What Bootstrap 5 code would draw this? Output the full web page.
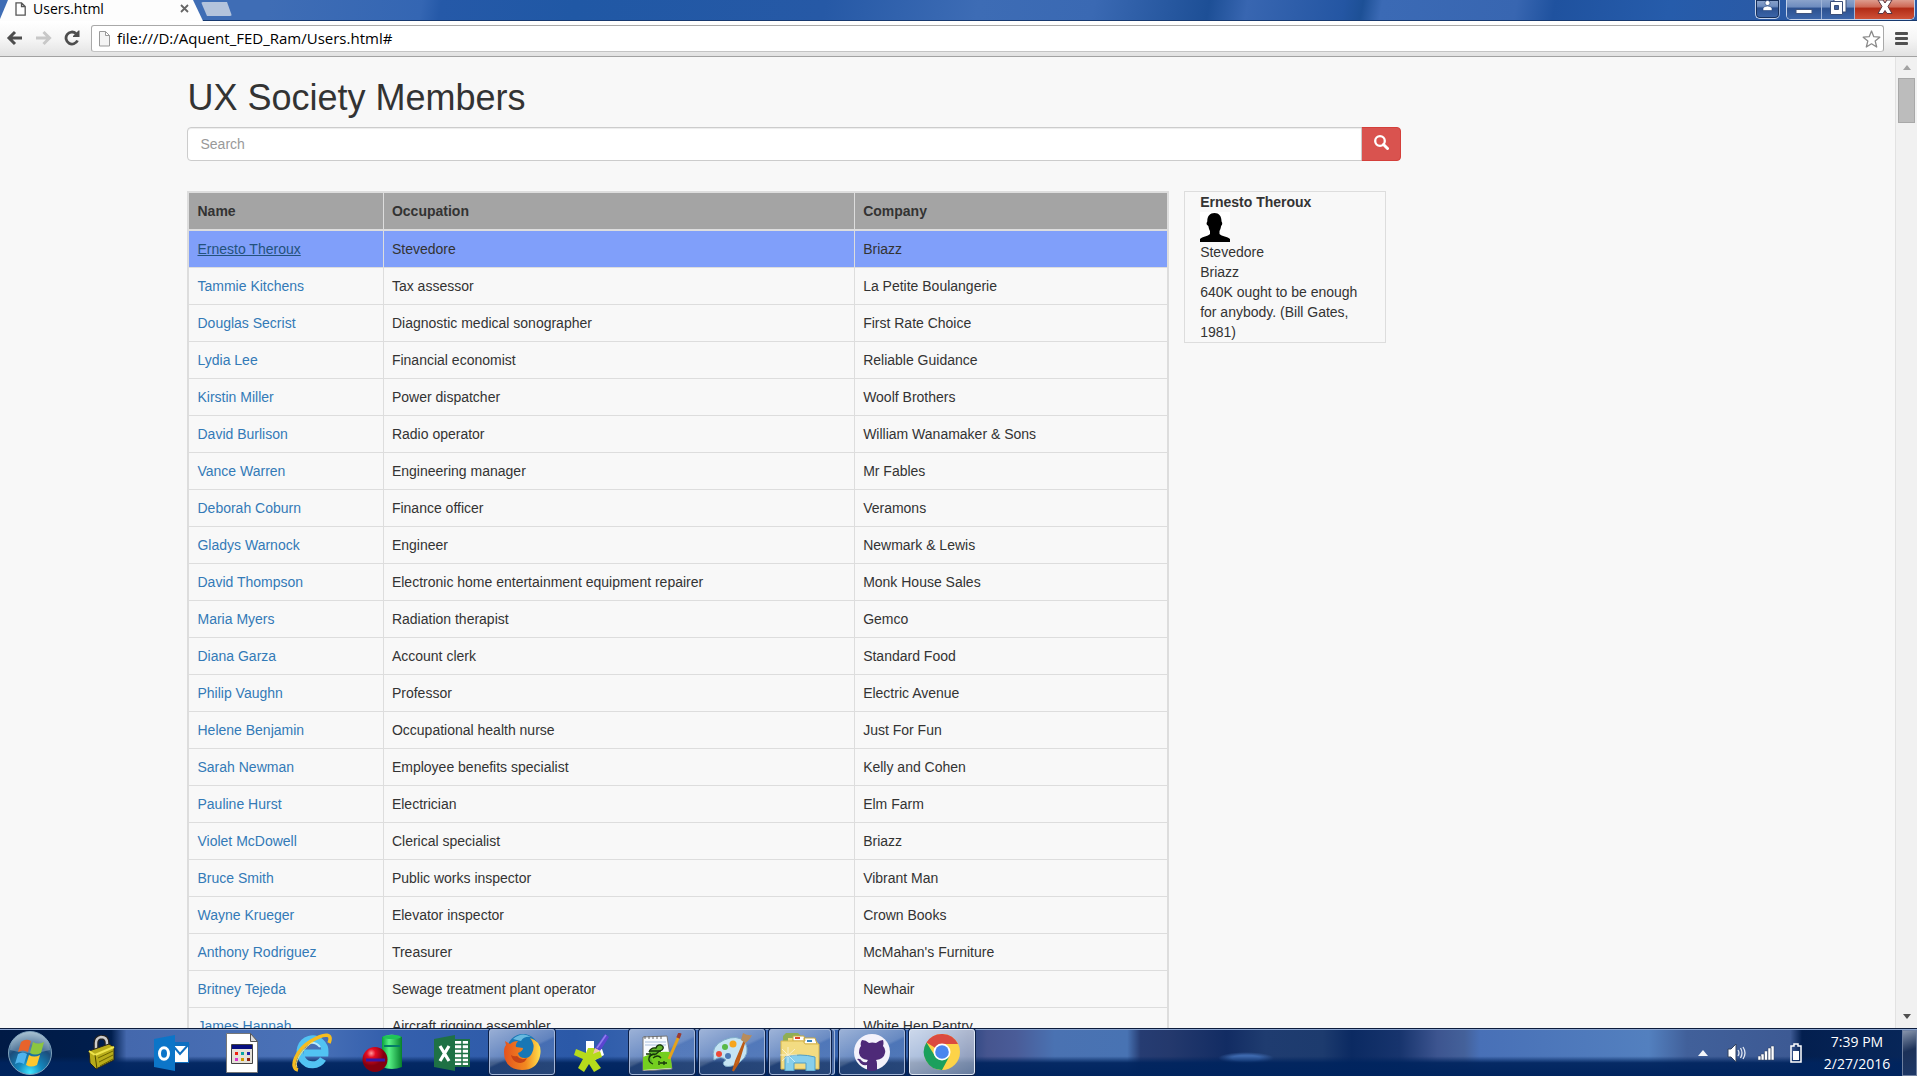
<!DOCTYPE html>
<html lang="en">
<head>
<meta charset="utf-8">
<meta name="viewport" content="width=device-width, initial-scale=1">
<title>Users.html</title>
<link href="https://cdn.jsdelivr.net/npm/bootstrap@5.3.0/dist/css/bootstrap.min.css" rel="stylesheet">
<style>
  body { font-family: "Liberation Sans", Arial, sans-serif; font-size: 14px; line-height: 20px; color: #333; background: #fff; }
  button { border: 0; background: none; padding: 0; }
  .desktop { padding: 0 3px 4px 0; }
  .chrome-font { font-family: "Open Sans", "Noto Sans", sans-serif; color: #000; }

  /* Window title strip */
  .titlebar { height: 21px; border-bottom: 1px solid #17396f;
    background: linear-gradient(100deg, #3f6db5 0, #3f6db5 14%, #3466b3 22%, #2559a8 23%, #2058a5 30%, #2659a6 43%, #3d6cb5 51%, #3a69b3 57%, #1d4f96 63%, #3866b1 65%, #2456a3 70%, #1d5096 71%, #3b6ab5 72%, #3866b1 79%, #1f529f 81%, #265cab 87%, #2a5aa6 92%, #2a5aa6 100%); }
  .tab-shape { width: 204px; height: 21px; margin-bottom: -1px; clip-path: polygon(0 90%, 8px 0, 193px 0, 203px 100%, 0 100%);
    background: #fdfdfd; padding: 0 15px 4px 15px; font-size: 14px; line-height: 17px; }
  .tab-label { margin-left: 7px; }
  .new-tab { width: 31px; height: 14px; background: #b3c3dc; clip-path: polygon(0 0, 26px 0, 31px 100%, 6px 100%); margin: 2px 0 0 -3px; border-radius: 2px; }
  .win-btns { padding-right: 2px; gap: 6px; }
  .win-box { height: 20px; border: 1px solid #c4d2ea; border-top: 0; border-radius: 0 0 5px 5px; overflow: hidden; box-shadow: inset 0 0 0 1px #17305c; }
  .glass { height: 19px; background: linear-gradient(#8ba3cb 0, #6f8dbf 35%, #2d5190 45%, #3c66aa 100%); border-right: 1px solid #9fb4d8; }
  .glass-close { background: linear-gradient(#dd9c8e 0, #cf6b58 35%, #b22c17 45%, #cf5238 100%); border-right: 0; }

  /* Address row */
  .toolbar { height: 36px; background: linear-gradient(#fff, #f6f6f6 50%, #e2e2e2); border-bottom: 1px solid #a2a2a2; padding: 4px 9px 0 6px; }
  .omnibox { height: 27px; border: 1px solid #a9a9a9; border-bottom-color: #c4c4c4; border-radius: 3px; background: #fff; padding: 0 2px 0 6px; }
  .omnibox input { border: 0; outline: 0; background: transparent; font-size: 15px; min-width: 0; padding: 0 0 2px; height: 25px; }

  /* Page area */
  .view { background: #f8f8f8; min-height: 0; }
  .doc { overflow: hidden; min-width: 0; padding: 0 12px 0 17px; }
  .scroll-track { width: 22px; background: #f1f1f1; border-left: 1px solid #e2e2e2; padding: 8px 2px 9px 2px; }
  .scroll-thumb { width: 17px; height: 45px; background: #bcbcbc; border: 1px solid #a8a8a8; margin-top: 8px; }
  .heading { font-size: 36px; line-height: 40px; font-weight: 400; margin: 0; padding: 21px 0 9px; }
  .search .form-control { height: 34px; font-size: 14px; line-height: 20px; padding: 6px 12px; border-color: #ccc; border-radius: 4px 0 0 4px; box-shadow: inset 0 1px 1px rgba(0,0,0,.075); }
  .search .form-control::placeholder { color: #999; }
  .btn-find { background: #d9534f; border: 1px solid #d43f3a; width: 40px; height: 34px; border-radius: 0 4px 4px 0; padding: 0 0 3px; }
  .gutter { padding: 0 15px; }
  .results { margin: 30px 15px 0 -15px; }
  .members { --bs-table-bg: transparent; --bs-table-color: #333; table-layout: fixed; margin: 0; border: 2px solid #ddd; border-collapse: collapse; }
  .members > :not(caption) > * > * { padding: 8px; border: 1px solid #ddd; color: #333; line-height: 20px; }
  .members > thead > tr > th { background: #a4a4a4; border-bottom: 2px solid #ddd; }
  .members a { color: #337ab7; text-decoration: none; }
  .members > tbody > tr.picked > td { background: #809ffa; }
  .members tr.picked a { color: #23527c; text-decoration: underline; }
  .c-name { width: 19.9%; } .c-job { width: 48.1%; }
  .profile { border: 1px solid #ddd; }

  /* Taskbar */
  .taskbar { height: 48px; border-top: 1px solid #0c1c3c; box-shadow: inset 0 1px 0 #8ba5cf;
    background: linear-gradient(transparent 0, transparent 58%, rgba(0,36,94,.93) 72%, #00245e 100%),
    radial-gradient(ellipse 28px 6px at 65% 62%, #3d68ad 0, #3d68ad 50%, transparent 100%),
    linear-gradient(90deg, #001a45 0, #001e4d 5.8%, #4468ad 6.6%, #4a72b8 16%, #3560ad 20%, #2b59a8 30%, #3d68b2 35%, #3462ad 48%, #2b4682 50.5%, #46558f 51.5%, #4a5c98 53%, #4a72b2 55%, #4873b3 58.8%, #263c72 59.5%, #24396d 61%, #122c63 64%, #1f3c70 66%, #1d3b6e 69%, #0b2a62 70.5%, #17346d 73%, #3d5590 75%, #44619a 76.4%, #4870b7 77.2%, #5380bf 86%, #41609a 88%, #3d5a94 93.4%, #031f4f 94%, #08275a 100%); }
  .start { width: 67px; padding-left: 6px; }
  .slot { width: 70px; height: 47px; }
  .slot > svg { display: block; }
  .running { width: 66px; height: 46px; margin: 0 2px; border: 1px solid #a3b6d8; border-radius: 3px; box-shadow: 0 0 0 1px #0b1f48;
    background: linear-gradient(155deg, rgba(255,255,255,.5) 0, rgba(255,255,255,.25) 48%, rgba(255,255,255,.12) 52%, rgba(255,255,255,.15) 100%); }
  .front { background: linear-gradient(155deg, rgba(255,255,255,.75), rgba(255,255,255,.4)); border-color: #e0e8f4; }
  .stacked { width: 62px; margin-right: 6px; box-shadow: 0 0 0 1px #0b1f48, 4px 0 0 -1px #4a6ba5, 4px 0 0 0 #a3b6d8; }
  .tray { gap: 11px; }
  .clock { color: #fff; font-size: 14px; line-height: 22px; width: 92px; text-align: center; padding-left: 2px; }
  .peek { width: 15px; height: 46px; border: 1px solid #6e7f9f; background: linear-gradient(160deg, #8694ab, #1c3158 45%, #1d3766); margin-top: 1px; }
</style>
<script src="https://cdn.jsdelivr.net/npm/bootstrap@5.3.0/dist/js/bootstrap.bundle.min.js"></script>
</head>
<body>
<div class="desktop vh-100 d-flex flex-column overflow-hidden">

  <header class="titlebar d-flex align-items-start flex-shrink-0 chrome-font">
    <div class="tab-shape d-flex align-items-center">
      <svg width="11" height="14" viewBox="0 0 11 14" fill="#fff" stroke="#555" stroke-width="1.3"><path d="M1 .8h5.5L10.2 4.500V13.200H1zM6.500 .8v3.700h3.700"/></svg>
      <span class="tab-label">Users.html</span>
      <button class="ms-auto d-flex" aria-label="Close tab"><svg width="9" height="9" viewBox="0 0 9 9" stroke="#666" stroke-width="1.800"><path d="M1 1l7 7M8 1L1 8"/></svg></button>
    </div>
    <button class="new-tab" aria-label="New tab"></button>
    <div class="win-btns d-flex ms-auto">
      <button class="win-box glass d-flex justify-content-center" style="width:25px" aria-label="Profile"><svg width="11" height="12" viewBox="0 0 11 12" fill="#fff" stroke="#24437c" stroke-width=".6"><circle cx="5.500" cy="3" r="2.500"/><path d="M1 10.500V8q1.500-2 4.500-2T10 8v2.500z"/></svg></button>
      <div class="win-box d-flex">
        <button class="glass d-flex justify-content-center" style="width:35px" aria-label="Minimize"><svg width="18" height="16"><rect x="1" y="9.500" width="16" height="4" fill="#fff" stroke="#40557f"/></svg></button>
        <button class="glass d-flex justify-content-center" style="width:33px" aria-label="Restore"><svg width="18" height="16" fill="#fff" stroke="#3b4f78"><path d="M5 -2h12v14h-12z"/><path d="M1.500 1.500h12v13h-12z"/><path d="M5.500 5.500h4v4h-4z" fill="#42619c"/></svg></button>
        <button class="glass glass-close d-flex justify-content-center" style="width:59px" aria-label="Close"><svg width="16" height="16" viewBox="0 0 16 16" fill="#fff" stroke="#5a3540"><path d="M1 0h5l2 3 2-3h5l-4 6.500 4 7h-5L8 10.500l-2 3H1l4-7z"/></svg></button>
      </div>
    </div>
  </header>

  <nav class="toolbar d-flex flex-shrink-0 chrome-font" aria-label="Browser">
    <div class="d-flex align-items-center" style="width:85px;height:26px">
      <button aria-label="Back" class="d-flex"><svg width="18" height="16" viewBox="0 0 18 16" fill="none" stroke="#4d4d4d" stroke-width="3"><path d="M16 8H3M9 2L3 8l6 6"/></svg></button>
      <button aria-label="Forward" class="d-flex" style="margin-left:11px"><svg width="18" height="16" viewBox="0 0 18 16" fill="none" stroke="#c8c8c8" stroke-width="3"><path d="M1 8h13M8.500 2l6 6-6 6"/></svg></button>
      <button aria-label="Reload" class="d-flex" style="margin-left:11px"><svg width="17" height="16" viewBox="0 0 17 16" fill="none" stroke="#4d4d4d" stroke-width="2.800"><path d="M13.500 10.500A6 6 0 1 1 12 3.500"/><path d="M9 7V6l5.500-5.500h1V7z" fill="#4d4d4d" stroke="none"/></svg></button>
    </div>
    <div class="omnibox d-flex align-items-center flex-grow-1">
      <svg width="13" height="16" viewBox="0 0 13 16" fill="#f4f4f4" stroke="#999"><path d="M1.500 .5h6l4 4v10.500h-10zM7.500 .5v4h4"/></svg>
      <input class="flex-grow-1 chrome-font" style="margin-left:6px" type="text" aria-label="Address" value="file:///D:/Aquent_FED_Ram/Users.html#">
      <button aria-label="Bookmark this page" class="d-flex"><svg width="19" height="18" viewBox="0 0 19 18" fill="#fff" stroke="#8a8a8a" stroke-width="1.300" stroke-linejoin="round"><path d="M9.500 1l2.300 5.700 6 .5-4.600 3.900 1.500 5.900-5.200-3.200L4.300 17l1.500-5.900L1.200 7.200l6-.5z"/></svg></button>
    </div>
    <button aria-label="Menu" style="margin-left:11px;height:27px" class="d-flex align-items-center"><svg width="13" height="13" fill="#505050"><rect width="13" height="3" rx="1"/><rect y="5" width="13" height="3" rx="1"/><rect y="10" width="13" height="3" rx="1"/></svg></button>
  </nav>

  <div class="view d-flex flex-grow-1">
    <main class="doc flex-grow-1">
      <div class="row g-0">
        <div class="col-8 offset-1 gutter">
          <h1 class="heading">UX Society Members</h1>
          <form class="search input-group flex-nowrap" role="search">
            <input type="text" class="form-control" placeholder="Search" aria-label="Search">
            <button class="btn-find d-flex align-items-center justify-content-center" type="button" aria-label="Search members"><svg width="15" height="15" viewBox="0 0 15 15" fill="none" stroke="#fff"><circle cx="6" cy="6" r="4.800" stroke-width="2.300"/><path d="M9.500 9.500l4 4" stroke-width="3" stroke-linecap="round"/></svg></button>
          </form>
          <div class="results d-flex align-items-start">
            <div class="col-10 gutter">
              <table class="table members">
                <thead><tr><th class="c-name" scope="col">Name</th><th class="c-job" scope="col">Occupation</th><th scope="col">Company</th></tr></thead>
                <tbody>
                  <tr class="picked"><td><a href="#">Ernesto Theroux</a></td><td>Stevedore</td><td>Briazz</td></tr>
                  <tr><td><a href="#">Tammie Kitchens</a></td><td>Tax assessor</td><td>La Petite Boulangerie</td></tr>
                  <tr><td><a href="#">Douglas Secrist</a></td><td>Diagnostic medical sonographer</td><td>First Rate Choice</td></tr>
                  <tr><td><a href="#">Lydia Lee</a></td><td>Financial economist</td><td>Reliable Guidance</td></tr>
                  <tr><td><a href="#">Kirstin Miller</a></td><td>Power dispatcher</td><td>Woolf Brothers</td></tr>
                  <tr><td><a href="#">David Burlison</a></td><td>Radio operator</td><td>William Wanamaker &amp; Sons</td></tr>
                  <tr><td><a href="#">Vance Warren</a></td><td>Engineering manager</td><td>Mr Fables</td></tr>
                  <tr><td><a href="#">Deborah Coburn</a></td><td>Finance officer</td><td>Veramons</td></tr>
                  <tr><td><a href="#">Gladys Warnock</a></td><td>Engineer</td><td>Newmark &amp; Lewis</td></tr>
                  <tr><td><a href="#">David Thompson</a></td><td>Electronic home entertainment equipment repairer</td><td>Monk House Sales</td></tr>
                  <tr><td><a href="#">Maria Myers</a></td><td>Radiation therapist</td><td>Gemco</td></tr>
                  <tr><td><a href="#">Diana Garza</a></td><td>Account clerk</td><td>Standard Food</td></tr>
                  <tr><td><a href="#">Philip Vaughn</a></td><td>Professor</td><td>Electric Avenue</td></tr>
                  <tr><td><a href="#">Helene Benjamin</a></td><td>Occupational health nurse</td><td>Just For Fun</td></tr>
                  <tr><td><a href="#">Sarah Newman</a></td><td>Employee benefits specialist</td><td>Kelly and Cohen</td></tr>
                  <tr><td><a href="#">Pauline Hurst</a></td><td>Electrician</td><td>Elm Farm</td></tr>
                  <tr><td><a href="#">Violet McDowell</a></td><td>Clerical specialist</td><td>Briazz</td></tr>
                  <tr><td><a href="#">Bruce Smith</a></td><td>Public works inspector</td><td>Vibrant Man</td></tr>
                  <tr><td><a href="#">Wayne Krueger</a></td><td>Elevator inspector</td><td>Crown Books</td></tr>
                  <tr><td><a href="#">Anthony Rodriguez</a></td><td>Treasurer</td><td>McMahan's Furniture</td></tr>
                  <tr><td><a href="#">Britney Tejeda</a></td><td>Sewage treatment plant operator</td><td>Newhair</td></tr>
                  <tr><td><a href="#">James Hannah</a></td><td>Aircraft rigging assembler</td><td>White Hen Pantry</td></tr>
                </tbody>
              </table>
            </div>
            <aside class="profile col-2 gutter">
              <strong class="d-block">Ernesto Theroux</strong>
              <svg class="d-block" width="30" height="30" viewBox="0 0 30 30"><path fill="#fff" d="M0 0h30v30H0z"/><path d="M14.500 1C19 1 21.500 4 21.500 9c0 1 1 1.200.7 3-.2 1.300-.9 1.500-1.200 2.500-.3 2-1 3.500-1.500 4.500v3c2 2.500 8.500 2.500 10.500 5V30H0v-3C2 24.500 8 24.500 10 22v-3c-.5-1-1.200-2.500-1.500-4.500-.3-1-1.700-1.200-1.900-2.500-.2-1.500.7-2 .7-3 0-5 2.700-8 7.200-8z"/></svg>
              <div>Stevedore</div>
              <div>Briazz</div>
              <div>640K ought to be enough for anybody. (Bill Gates, 1981)</div>
            </aside>
          </div>
        </div>
      </div>
    </main>
    <div class="scroll-track d-flex flex-column align-items-center flex-shrink-0" aria-hidden="true">
      <svg width="8" height="5"><path d="M0 5l4-5 4 5z" fill="#a3a3a3"/></svg>
      <div class="scroll-thumb"></div>
      <svg class="mt-auto" width="8" height="5"><path d="M0 0h8L4 5z" fill="#505050"/></svg>
    </div>
  </div>

  <footer class="taskbar d-flex flex-shrink-0">
    <button class="start d-flex align-items-center" aria-label="Start">
      <svg width="48" height="47" viewBox="0 0 48 47">
        <defs><radialGradient id="orb" cx=".5" cy=".95" r=".95"><stop offset="0" stop-color="#3fe6ff"/><stop offset=".3" stop-color="#1487bd"/><stop offset=".65" stop-color="#1c4d7c"/><stop offset="1" stop-color="#8fb0c4"/></radialGradient></defs>
        <circle cx="24" cy="24" r="21.500" fill="url(#orb)" stroke="#7fa3bd"/>
        <path d="M4 21a20 18 0 0 1 40 0q-20 6-40 0z" fill="#fff" opacity=".25"/>
        <path d="M15 13q5-4 10-1l-3 11q-5-3-10 0z" fill="#e8632c"/><path d="M27 13q5 3 11 0l-3 11q-6 3-11 0z" fill="#8cc63f"/><path d="M12 25q5-3 9 0l-3 10q-5-3-9 0z" fill="#4fb4ee"/><path d="M23 26q5 3 11 0l-3 10q-6 3-11 0z" fill="#fdc72f"/>
      </svg>
    </button>
    <button class="slot d-flex align-items-center justify-content-center" aria-label="Password safe">
      <svg width="30" height="36" viewBox="0 0 30 36"><path d="M9 14V8q0-5 5-6 6 0 6 6v5" fill="none" stroke="#222" stroke-width="5"/><path d="M9 14V8q0-5 5-6 6 0 6 6v5" fill="none" stroke="#ccc" stroke-width="2.500"/><path d="M2 16l20-7 5 3v13l-18 9-6-6z" fill="#b8ac1a" stroke="#222"/><path d="M2 16l6 4 19-8" fill="none" stroke="#eee44c" stroke-width="2"/><path d="M8 20l2 14" stroke="#4f4a00"/><path d="M11 23l15-7M12 27l14-7M13 31l13-7" stroke="#6d6500"/></svg>
    </button>
    <button class="slot d-flex align-items-center justify-content-center" aria-label="Outlook">
      <svg width="36" height="36" viewBox="0 0 36 36"><path d="M18 7h17v21H18z" fill="#0f6fc0"/><path d="M20 11h14v16H20z" fill="#fff"/><path d="M20 12l6 7 9-10" fill="none" stroke="#0f6fc0" stroke-width="2"/><path d="M0 4l21-4v36L0 32z" fill="#0c75c8"/><ellipse cx="10" cy="18.500" rx="4.500" ry="5.800" fill="none" stroke="#fff" stroke-width="3"/></svg>
    </button>
    <button class="slot d-flex align-items-center justify-content-center" aria-label="Program launcher">
      <svg width="32" height="40" viewBox="0 0 32 40"><path d="M.5.5h24l7 8v31H.5z" fill="#fff" stroke="#777"/><path d="M24.500.5v8h7z" fill="#ddd" stroke="#555"/><path d="M5.500 11.500h21v19h-21z" fill="#e4e0d8" stroke="#444"/><path d="M6 12h20v4H6z" fill="#070f80"/><path d="M9 19h3v3H9z" fill="#e21"/><path d="M15 19h3v3h-3z" fill="#08a4a4"/><path d="M21 19h3v3h-3z" fill="#22a"/><path d="M9 25h3v3H9z" fill="#d3c"/><path d="M15 25h3v3h-3z" fill="#c90"/><path d="M21 25h3v3h-3z" fill="#921"/></svg>
    </button>
    <button class="slot d-flex align-items-center justify-content-center" aria-label="Internet Explorer">
      <svg width="42" height="40" viewBox="0 0 42 40" fill="none"><path d="M32 26A12.500 13 0 1 1 34 20H13" stroke="#52c3f2" stroke-width="7"/><path d="M29 14A10 10 0 0 0 12 15" stroke="#b9ecff" stroke-width="2"/><path d="M7 37C-2 35 5 17 20 8S42 1 38 10" stroke="#f5bc20" stroke-width="3.500"/><path d="M6 34C3 29 12 15 22 9" stroke="#ffe573"/></svg>
    </button>
    <button class="slot d-flex align-items-center justify-content-center" aria-label="Shapes">
      <svg width="42" height="40" viewBox="0 0 42 40"><defs><linearGradient id="can"><stop stop-color="#07a53a"/><stop offset=".35" stop-color="#58f286"/><stop offset="1" stop-color="#067f2c"/></linearGradient><radialGradient id="ball" cx=".35" cy=".25"><stop stop-color="#ff9a9a"/><stop offset=".35" stop-color="#e60c22"/><stop offset="1" stop-color="#84000f"/></radialGradient></defs><path d="M21 4q10-5 20 0v30q-10 4-20 0z" fill="url(#can)"/><ellipse cx="31" cy="4" rx="9" ry="2" fill="#1fc458"/><path d="M23 13h16" stroke="#057b68" stroke-width="2"/><circle cx="14" cy="26.500" r="12.500" fill="url(#ball)"/><path d="M5 27h19" stroke="#3a17a5" stroke-width="3"/></svg>
    </button>
    <button class="slot d-flex align-items-center justify-content-center" aria-label="Excel">
      <svg width="36" height="36" viewBox="0 0 36 36"><path d="M19 5h16v26H19z" fill="#fff" stroke="#1e7145" stroke-width="2"/><path d="M21 9.500h13M21 14h13M21 18.500h13M21 23h13M21 27h13M28 6v24" stroke="#1e7145" stroke-width="1.500"/><path d="M0 4l21-4v36L0 32z" fill="#1e7145"/><path d="M6 11l9 15M15 11L6 26" stroke="#fff" stroke-width="3.200"/></svg>
    </button>
    <button class="running d-flex align-items-center justify-content-center" aria-label="Firefox">
      <svg width="38" height="38" viewBox="0 0 38 38"><defs><linearGradient id="fox" x1="0" x2="1"><stop stop-color="#e5521e"/><stop offset=".6" stop-color="#f28a20"/><stop offset="1" stop-color="#ffe14d"/></linearGradient></defs><circle cx="20" cy="17" r="16" fill="#1877b5"/><path d="M10 6Q19-2 28 4q-7-1-10 4z" fill="#67b9df"/><path d="M2 8l5 3q3-3 8-3-3 3-2 6l7 1q0 3-5 5 1 5 7 5 5 0 7-5 4-8-2-15 13 4 10 18-3 14-18 14Q1 36 1 19q0-5 2-7z" fill="url(#fox)"/><path d="M14 23q4 5 10 2-3 7-11 4-4-2-5-7 3 2 6 1z" fill="#c74316"/></svg>
    </button>
    <button class="slot d-flex align-items-center justify-content-center" aria-label="Asterisk notes">
      <svg width="36" height="40" viewBox="0 0 36 40"><path d="M12 8h8v9l8-1 2 6-9 5-9-4z" fill="#fff"/><path d="M2 16l10 4 2-5h6l2 4 4-1 2 6-7 3 6 8-7 4-5-8-5 8-6-4 5-9-9-4z" fill="#b6db1b"/><path d="M21 15l10-14 4 3-9 14z" fill="#5b45d0"/><path d="M23 15l9-13" stroke="#8f80ef" stroke-width="1.500"/><path d="M21 15l-2 6 7-3z" fill="#efc4aa"/></svg>
    </button>
    <button class="running d-flex align-items-center justify-content-center" aria-label="Notepad++">
      <svg width="40" height="38" viewBox="0 0 40 38"><path d="M1 4l24-1 5 33-29 2z" fill="#f8fbff" stroke="#777"/><path d="M1 24q13-6 27-5l2 16-29 2z" fill="#74cf20"/><path d="M3 3v3m4-3v3m4-3v3m4-3v3m4-3v3" stroke="#666"/><path d="M3 9h21M3 12h21" stroke="#a9bfdd"/><path d="M7 19q2-5 7-4 1-4 5-3 4 2 1 5-3 1-6 4-6 0-7 4t4 6" fill="#5fb52a" stroke="#16350b" stroke-width="1.300"/><path d="M4 21h5m-1-3h11m-8 7q5-4 8 0m-1 5h7m-8-2v4m5-4v4M7 24q3-4 6-2" fill="none" stroke="#16350b" stroke-width="1.300"/><path d="M27 26L37 3" stroke="#e5a31d" stroke-width="3"/><path d="M36 5l2-5" stroke="#9a3a34" stroke-width="3.500"/></svg>
    </button>
    <button class="running d-flex align-items-center justify-content-center" aria-label="Paint">
      <svg width="42" height="40" viewBox="0 0 42 40"><path d="M3 28Q-1 14 13 8q13-6 21 2 6 12-5 20-9 6-15 4-4-3 1-6-5-5-12 0z" fill="#c5e4f3" stroke="#7facc9"/><circle cx="8" cy="22" r="3" fill="#ed4837"/><circle cx="14" cy="15" r="3" fill="#58b947"/><circle cx="22" cy="12" r="3.500" fill="#f7a51c"/><circle cx="17" cy="24" r="3" fill="#4b79b5"/><path d="M34 8L25 29l-3 10 5-8z" fill="#d87427" stroke="#bc5b16" stroke-width="2"/><path d="M32 1q5 3 9 2-3 6-7 8l-4-3z" fill="#b78c5c"/></svg>
    </button>
    <button class="running stacked d-flex align-items-center justify-content-center" aria-label="File Explorer">
      <svg width="40" height="38" viewBox="0 0 40 38"><path d="M3 3l3-3h12l3 3v30H3z" fill="#8fae54"/><path d="M8 5h24l6 5v24H8z" fill="#f4dc7c"/><path d="M13 3h11l1 5H13zM24 5h11l2 6H24z" fill="#fff" stroke="#caa93d"/><path d="M15 5h5" stroke="#df432d" stroke-width="2"/><path d="M27 8h5" stroke="#3984bc" stroke-width="2"/><path d="M1 8h22l2 3h14v25H1z" fill="#f3dc82" stroke="#d9b84c"/><path d="M5 24q15-4 30 0v14h-9v-8H14v8H5z" fill="#87cfec" stroke="#4e9dc5"/><path d="M8 14v16M0 22h17M2 16l13 13M15 16L2 28" stroke="#fff" opacity=".6"/></svg>
    </button>
    <button class="running d-flex align-items-center justify-content-center" aria-label="GitHub">
      <svg width="38" height="38" viewBox="0 0 38 38"><circle cx="19" cy="19" r="18" fill="#f4f2fb"/><path d="M9 7q4 0 7 3 3-1 7 0 4-3 7-3 1 3 0 6 3 3 2 7-1 6-9 7 1 1 1 4v6q-5 2-10 0v-5q-6 1-8-4l-2-2q3-1 5 2 2 2 5 1 0-1 1-2-8-1-9-7 0-5 2-7-1-3 1-6z" fill="#4e2a78"/></svg>
    </button>
    <button class="running front d-flex align-items-center justify-content-center" aria-label="Chrome">
      <svg width="38" height="38" viewBox="0 0 38 38"><circle cx="19" cy="19" r="18" fill="#fdd348"/><path d="M19 19L3.500 9.500A18 18 0 0 1 35 11H19z" fill="#db4a3f"/><path d="M3.500 9.500L12 23l7 4 7-3-7 13A18 18 0 0 1 3.500 9.500z" fill="#1ba05d"/><circle cx="19" cy="19" r="8.500" fill="#fff"/><circle cx="19" cy="19" r="6.800" fill="#4a86ee"/></svg>
    </button>

    <div class="tray d-flex align-items-center ms-auto">
      <button aria-label="Show hidden icons" class="d-flex me-2"><svg width="10" height="6"><path d="M0 6l5-6 5 6z" fill="#f4f6fa"/></svg></button>
      <button aria-label="Volume" class="d-flex"><svg width="20" height="20" viewBox="0 0 20 20"><path d="M1 6h3l5-5v18l-5-5H1z" fill="#fff" stroke="#33435f"/><path d="M11 7q2 3 0 6m2.500-8q3 5 0 10M16 4q4 6 0 12" fill="none" stroke="#dfe6f2" stroke-width="1.300"/></svg></button>
      <button aria-label="Network" class="d-flex"><svg width="17" height="16" fill="#fff" stroke="#33435f" stroke-width=".5"><path d="M0 11h3v4H0zM3 9h3v6H3zM6.500 6h3v9h-3zM10 3h3v12h-3zM13 1h3v14h-3z"/></svg></button>
      <button aria-label="Battery" class="d-flex" style="margin-left:4px"><svg width="12" height="20" viewBox="0 0 12 20" fill="none" stroke="#fff" stroke-width="1.500"><path d="M4 1h4v2h3v16H1V3h3z"/><path d="M3 8h6v9H3z" fill="#fff" stroke="none"/></svg></button>
    </div>
    <div class="clock chrome-font d-flex flex-column justify-content-center text-white ms-2"><span>7:39 PM</span><span>2/27/2016</span></div>
    <button class="peek" aria-label="Show desktop"></button>
  </footer>
</div>
</body>
</html>
